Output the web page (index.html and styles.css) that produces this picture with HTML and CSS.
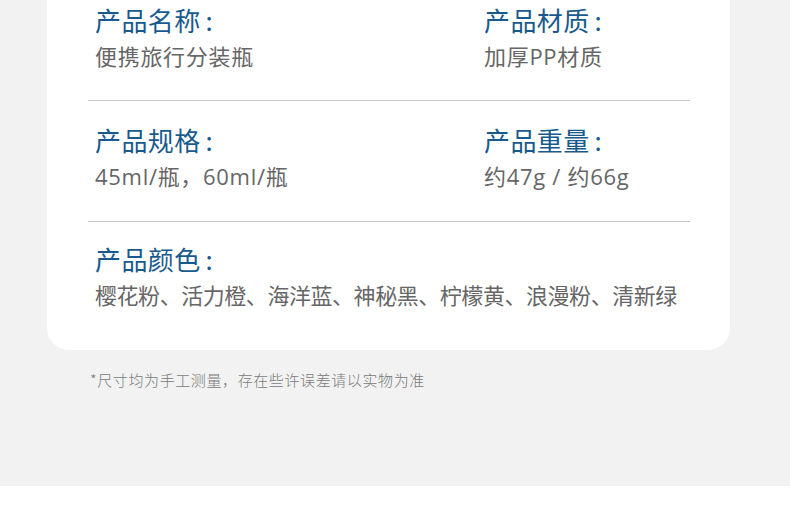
FILE: index.html
```html
<!DOCTYPE html>
<html lang="zh-CN">
<head>
<meta charset="utf-8">
<title>产品参数</title>
<link rel="stylesheet" href="styles.css">
</head>
<body>
<div class="page">
  <div class="card">
    <div class="row row-first">
      <div class="cell">
        <div class="label">产品名称<span class="colon">:</span></div>
        <div class="value">便携旅行分装瓶</div>
      </div>
      <div class="cell">
        <div class="label">产品材质<span class="colon">:</span></div>
        <div class="value">加厚PP材质</div>
      </div>
    </div>
    <div class="row">
      <div class="cell">
        <div class="label">产品规格<span class="colon">:</span></div>
        <div class="value">45ml/瓶，60ml/瓶</div>
      </div>
      <div class="cell">
        <div class="label">产品重量<span class="colon">:</span></div>
        <div class="value">约47g / 约66g</div>
      </div>
    </div>
    <div class="row row-last">
      <div class="cell cell-wide">
        <div class="label">产品颜色<span class="colon">:</span></div>
        <div class="value value-tight">樱花粉、活力橙、海洋蓝、神秘黑、柠檬黄、浪漫粉、清新绿</div>
      </div>
    </div>
  </div>
  <p class="note">*尺寸均为手工测量，存在些许误差请以实物为准</p>
</div>
<div class="footer"></div>
</body>
</html>
```
FILE: styles.css
```css
html, body {
  margin: 0;
  padding: 0;
  background: #ffffff;
  font-family: "Noto Sans CJK SC", "Noto Sans", sans-serif;
}

.page {
  background: #f2f2f2;
  height: 486px;
  padding: 0 60px 0 47px;
  box-sizing: border-box;
  overflow: hidden;
}

.card {
  background: #ffffff;
  width: 683px;
  border-radius: 0 0 22px 22px;
  padding: 0 40px 0 41px;
  box-sizing: border-box;
}

.row {
  display: grid;
  grid-template-columns: 389px 1fr;
  padding: 21px 7px 30px;
  border-bottom: 1px solid #c8c8c8;
}

.row-first {
  padding-top: 2px;
  padding-bottom: 29px;
}

.row-last {
  border-bottom: none;
  padding-top: 19px;
  padding-bottom: 40px;
}

.cell-wide {
  grid-column: 1 / -1;
}

.label {
  font-size: 26px;
  line-height: 36px;
  color: #185a8d;
  letter-spacing: 0.4px;
}

.colon {
  padding-left: 5px;
}

.value {
  margin-top: 3px;
  font-family: "Open Sans", "Noto Sans CJK SC", sans-serif;
  font-size: 22px;
  line-height: 30px;
  color: #666666;
  letter-spacing: 0.7px;
  white-space: nowrap;
}

.value-tight {
  letter-spacing: -0.45px;
}

.note {
  margin: 0;
  padding: 20px 0 0 43px;
  font-size: 15px;
  line-height: 20px;
  font-weight: 300;
  color: #7a7a7a;
  letter-spacing: 0.6px;
}

.footer {
  height: 36px;
  background: #ffffff;
}
```
